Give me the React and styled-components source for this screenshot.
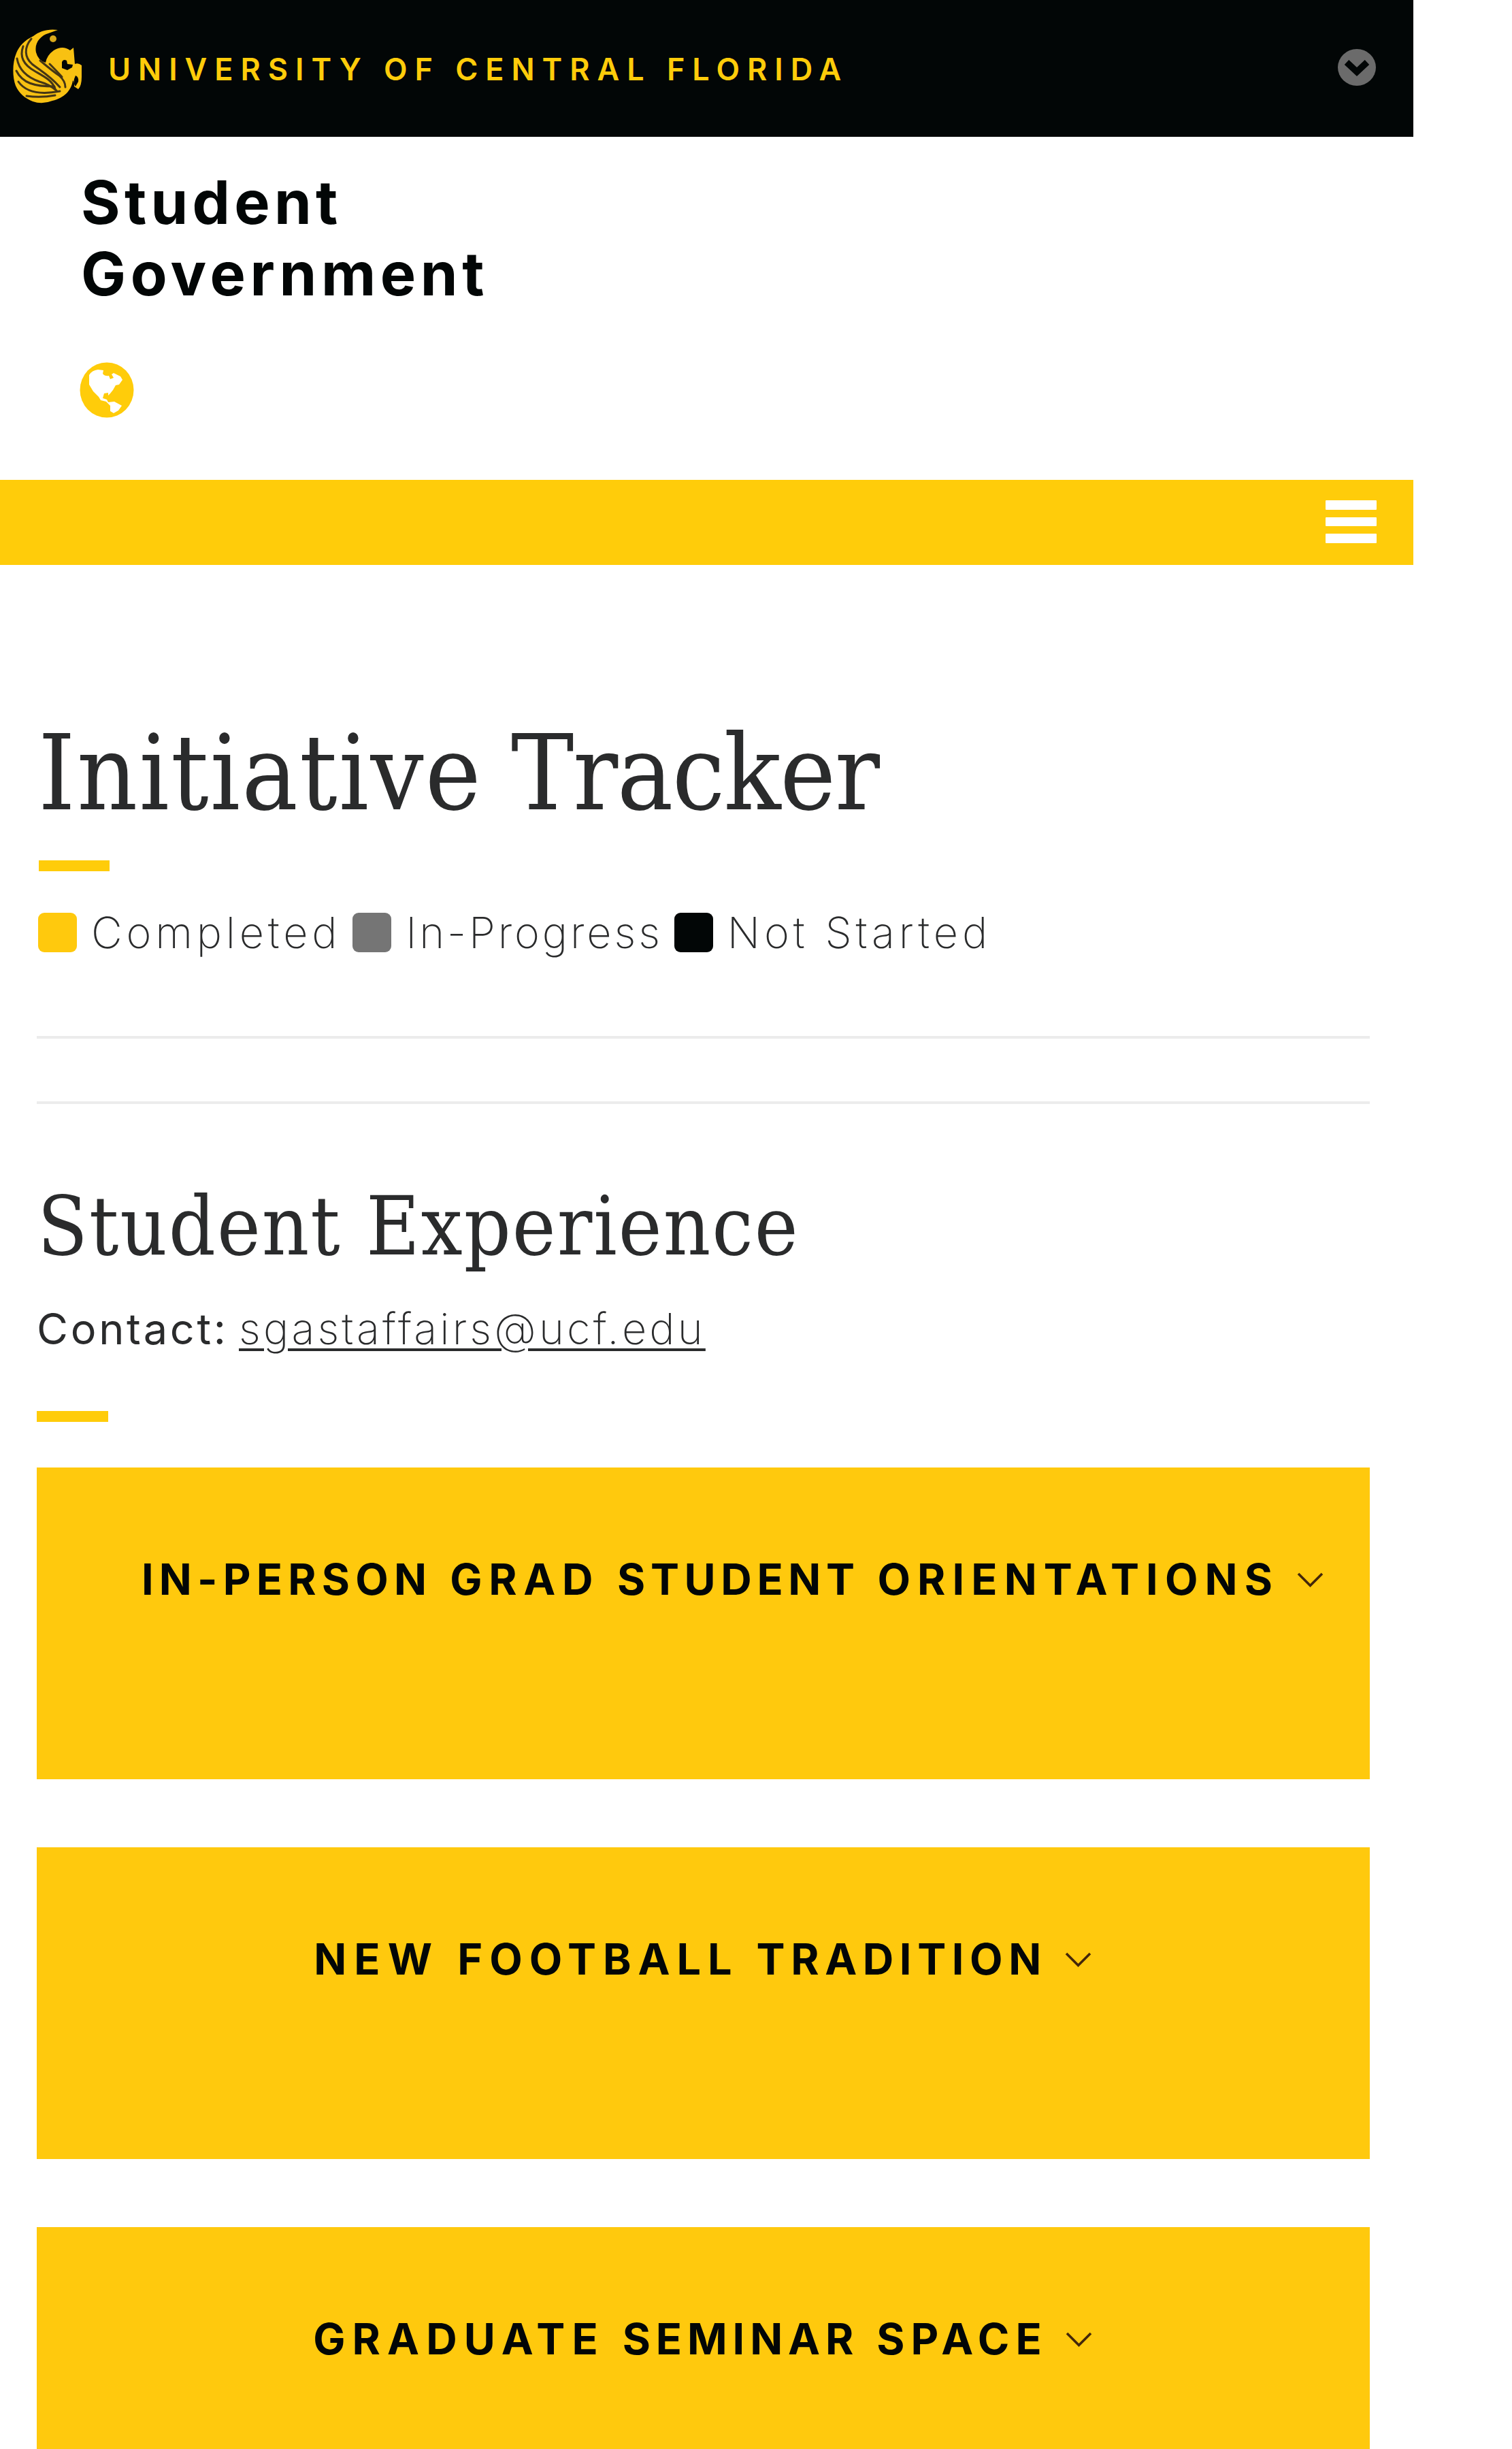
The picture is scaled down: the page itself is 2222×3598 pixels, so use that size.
import React, { Fragment } from "react";
import styled, { createGlobalStyle } from "styled-components";

const sans = `Inter, "Liberation Sans", sans-serif`;
const slab = `"DejaVu Serif Condensed", "DejaVu Serif", serif`;
const ink = "#2a2b2c";
const black = "#020606";
const gold = "#ffcc0a";

const GlobalStyle = createGlobalStyle`
  *, *::before, *::after { box-sizing: border-box; }
  html { background: #fff; }
  body { margin: 0; background: #fff; overflow: hidden; font-family: ${sans}; color: ${ink}; }
  svg { display: block; flex: none; }
`;

const Page = styled.div`
  width: 2077px;
  height: 3598px;
  overflow: hidden;
  display: flex;
  flex-direction: column;
`;

const UniversityBar = styled.header`
  flex: none;
  height: 201px;
  padding: 0 54px 0 19px;
  display: flex;
  align-items: center;
  background: ${black};
`;

const LogoSlot = styled.div`
  margin-bottom: 7px;
`;

const UniversityName = styled.a`
  margin: 2px auto 0 39px;
  font-size: 45px;
  font-weight: 600;
  line-height: 66px;
  letter-spacing: 10.95px;
  white-space: nowrap;
  color: ${gold};
`;

const ToggleSlot = styled.div`
  margin-bottom: 3px;
`;

const SiteHeader = styled.div`
  flex: none;
  height: 504px;
  padding: 44px 0 0 117px;
`;

const SiteTitle = styled.div`
  margin: 0 0 77px 2px;
  font-size: 88px;
  font-weight: 700;
  line-height: 105px;
  color: ${black};
`;

const TitleLine = styled.div`
  letter-spacing: ${(p) => p.$spacing}px;
`;

const NavBar = styled.nav`
  flex: none;
  height: 125px;
  padding: 30px 54px 0 0;
  display: flex;
  justify-content: flex-end;
  background: ${gold};
`;

const MenuButton = styled.div`
  width: 75px;
  display: flex;
  flex-direction: column;
  gap: 11px;
`;

const MenuLine = styled.span`
  height: 13.6px;
  border-radius: 1px;
  background: #fff;
`;

const Main = styled.main`
  padding: 216px 64px 0 54px;
`;

const Word = styled.span`
  letter-spacing: ${(p) => p.$spacing}px;
`;

const PageTitle = styled.h1`
  margin: 0 0 38px 2px;
  font-family: ${slab};
  font-size: 154px;
  font-weight: 400;
  line-height: 180px;
  letter-spacing: -2px;
  white-space: nowrap;
`;

const Accent = styled.div`
  width: ${(p) => p.$width}px;
  height: 16px;
  margin-left: ${(p) => p.$indent || 0}px;
  background: ${gold};
`;

const Legend = styled.div`
  display: flex;
  gap: 17px;
  margin: 50px 0 112px 2px;
`;

const LegendItem = styled.div`
  display: flex;
  align-items: center;
  font-size: 63px;
  font-weight: 200;
  line-height: 80px;
  letter-spacing: ${(p) => p.$spacing}px;
  white-space: nowrap;
`;

const Swatch = styled.span`
  width: 57px;
  height: 58px;
  margin-right: 21px;
  border-radius: 9px;
  background: ${(p) => p.$color};
`;

const Divider = styled.hr`
  height: 4px;
  margin: 0 0 92px;
  border: 0;
  background: #ececec;
`;

const SectionTitle = styled.h2`
  margin: 110px 0 40px 1px;
  font-family: ${slab};
  font-size: 120px;
  font-weight: 400;
  line-height: 140px;
  letter-spacing: 2px;
  white-space: nowrap;
`;

const Contact = styled.div`
  display: flex;
  margin-bottom: 81px;
  font-size: 63px;
  line-height: 80px;
`;

const ContactLabel = styled.span`
  width: 297px;
  font-weight: 400;
  letter-spacing: 3.7px;
`;

const ContactLink = styled.a`
  font-weight: 200;
  letter-spacing: 4.15px;
  text-decoration: underline;
  text-decoration-thickness: 4px;
  text-underline-offset: 6px;
`;

const Cards = styled.div`
  display: flex;
  flex-direction: column;
  gap: 100px;
  margin-top: 67px;
`;

const Card = styled.section`
  height: 458px;
  padding: 119px 0 0 ${(p) => p.$indent}px;
  display: flex;
  justify-content: center;
  align-items: flex-start;
  background: #ffc90d;
`;

const CardTitle = styled.h3`
  display: flex;
  align-items: center;
  margin: 0 2px 0 0;
  font-size: 63px;
  font-weight: 700;
  line-height: 90px;
  letter-spacing: 11px;
  white-space: nowrap;
  color: ${black};
`;

const ChevronSlot = styled.span`
  margin: 2px 0 0 26px;
`;

const Words = ({ items }) =>
  items.map(([text, spacing], i) => (
    <Fragment key={text}>
      {i > 0 && " "}
      <Word $spacing={spacing}>{text}</Word>
    </Fragment>
  ));

const Pegasus = () => (
  <svg width="101" height="109" viewBox="0 0 101 109">
    <path
      fill="#f8c112"
      d="M66 1C51-1 39 3 30 10C17 16 9 25 5 35C-1 49-1 70 4 83C9 94 17 101 29 106Q43 111 58 105C75 101 86 90 88 75Q91 79 90 84L96 88Q101 83 101 70V53Q96 49 91 51L89 27L84 31Q73 23 60 31Q50 38 48 49Q37 46 34 34C31 20 41 9 52 6Z"
    />
    <circle cx="59" cy="14" r="5" fill="#d9a91b" />
    <path fill={black} d="M72 48Q74 43 79 46L80 51L88 52L87 56L80 60L72 57Z" />
    <path fill={black} d="M92 68Q97 70 96 77L92 84Q87 78 92 68Z" />
    <g fill="none" stroke="#443515" strokeWidth="3" strokeLinecap="round">
      <path d="M27 14C16 27 17 41 28 51C39 60 52 66 69 85" />
      <path d="M15 25C8 44 20 55 33 62C47 70 57 75 62 87" />
      <path d="M6 43C9 61 22 71 39 77C50 80 57 84 64 90" />
      <path d="M5 61C14 79 31 84 61 84" />
      <path d="M8 77C20 94 43 96 69 91" />
      <path d="M20 98Q41 101 62 97" />
      <path d="M40 46Q59 62 68 68Q77 76 77 85" />
      <path d="M54 51Q65 62 72 70" />
    </g>
  </svg>
);

const CircleChevron = () => (
  <svg width="58" height="54" viewBox="0 0 58 54">
    <ellipse cx="29" cy="27" rx="28" ry="27" fill="#6b6b6b" />
    <path d="M14 19.5L29 33.5L44 19.5" fill="none" stroke={black} strokeWidth="9.5" />
  </svg>
);

const Globe = () => (
  <svg width="80" height="82" viewBox="0 0 80 82">
    <ellipse cx="40" cy="41" rx="39.5" ry="40.5" fill={gold} />
    <path
      fill="#fff"
      d="M14 19Q18 12 27 11L35 12L34 17Q37 21 43 20L45 25L50 23L47 18L50 16L60 21L63 26L58 33L53 34L49 41L45 46L42 49L42 45L36 46L34 53L40 55L42 59L51 58L62 64L57 71L50 75L45 72L45 64L39 58L31 56L28 51L20 43L14 33Z"
    />
  </svg>
);

const Chevron = () => (
  <svg width="39" height="25" viewBox="0 0 39 25">
    <path d="M2 3L19.5 20.5L37 3" fill="none" stroke="#43260a" strokeWidth="3.6" />
  </svg>
);

const legend = [
  { label: "Completed", color: "#ffc90d", spacing: 5.8 },
  { label: "In-Progress", color: "#757575", spacing: 3.85 },
  { label: "Not Started", color: black, spacing: 5.95 },
];

const initiatives = [
  {
    words: [["IN-PERSON", 8.2], ["GRAD", 9.7], ["STUDENT", 7.6], ["ORIENTATIONS", 10.1]],
    indent: 88,
  },
  { words: [["NEW", 11.2], ["FOOTBALL", 9.9], ["TRADITION", 8.6]], indent: 0 },
  { words: [["GRADUATE", 10.1], ["SEMINAR", 7.9], ["SPACE", 9.1]], indent: 0 },
];

export default function App() {
  return (
    <>
      <GlobalStyle />
      <Page>
        <UniversityBar>
          <LogoSlot>
            <Pegasus />
          </LogoSlot>
          <UniversityName>UNIVERSITY OF CENTRAL FLORIDA</UniversityName>
          <ToggleSlot>
            <CircleChevron />
          </ToggleSlot>
        </UniversityBar>
        <SiteHeader>
          <SiteTitle>
            <TitleLine $spacing={6.3}>Student</TitleLine>
            <TitleLine $spacing={6.6}>Government</TitleLine>
          </SiteTitle>
          <Globe />
        </SiteHeader>
        <NavBar>
          <MenuButton>
            <MenuLine />
            <MenuLine />
            <MenuLine />
          </MenuButton>
        </NavBar>
        <Main>
          <PageTitle>
            <Words items={[["Initiative", 2.2], ["Tracker", -1.5]]} />
          </PageTitle>
          <Accent $width={104} $indent={3} />
          <Legend>
            {legend.map((item) => (
              <LegendItem key={item.label} $spacing={item.spacing}>
                <Swatch $color={item.color} />
                {item.label}
              </LegendItem>
            ))}
          </Legend>
          <Divider />
          <Divider />
          <SectionTitle>Student Experience</SectionTitle>
          <Contact>
            <ContactLabel>Contact:</ContactLabel>
            <ContactLink>sgastaffairs@ucf.edu</ContactLink>
          </Contact>
          <Accent $width={105} />
          <Cards>
            {initiatives.map((item) => (
              <Card key={item.words[0][0]} $indent={item.indent}>
                <CardTitle>
                  <span>
                    <Words items={item.words} />
                  </span>
                  <ChevronSlot>
                    <Chevron />
                  </ChevronSlot>
                </CardTitle>
              </Card>
            ))}
          </Cards>
        </Main>
      </Page>
    </>
  );
}
